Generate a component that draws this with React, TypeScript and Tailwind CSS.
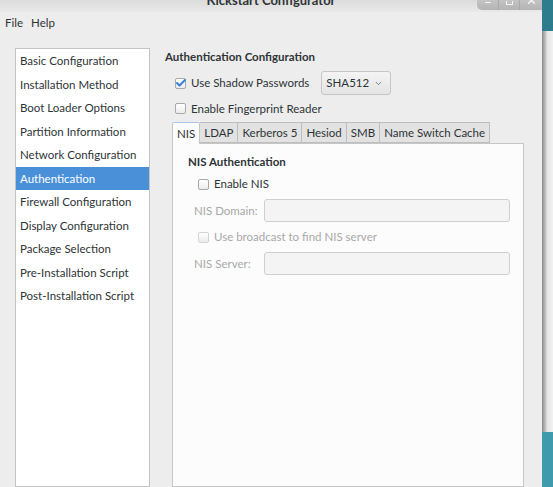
import { Check, ChevronDown } from "lucide-react";

const sections = [
  "Basic Configuration",
  "Installation Method",
  "Boot Loader Options",
  "Partition Information",
  "Network Configuration",
  "Authentication",
  "Firewall Configuration",
  "Display Configuration",
  "Package Selection",
  "Pre-Installation Script",
  "Post-Installation Script",
];

const tabs = ["NIS", "LDAP", "Kerberos 5", "Hesiod", "SMB", "Name Switch Cache"];

type BoxProps = { checked?: boolean; disabled?: boolean };

const CheckBox = ({ checked, disabled }: BoxProps) => (
  <span
    className={`relative inline-flex h-[11px] w-[11px] shrink-0 rounded-[2px] border bg-gradient-to-b from-white to-[#ececec] ${
      disabled ? "border-[#d4d4d4]" : "border-[#a8a8a8]"
    }`}
  >
    {checked && (
      <Check
        className="absolute -left-[1px] -top-[2px] h-[12px] w-[12px] text-[#3b7fd0]"
        strokeWidth={4}
      />
    )}
  </span>
);

const App = () => {
  return (
    <div className="flex h-[487px] w-[553px] overflow-hidden font-['Lato',sans-serif] text-[11.5px] text-[#2e3436]">
      {/* window */}
      <div className="flex w-[542px] shrink-0 flex-col bg-[#ededed]">
        {/* title bar, cut off at the top */}
        <div className="relative flex h-[12px] shrink-0 justify-center bg-gradient-to-b from-[#dcdcdc] to-[#e9e9e9]">
          <span className="-mt-[9px] text-[13px] font-bold text-[#2e3436]">
            Kickstart Configurator
          </span>
          <div className="absolute right-0 top-0 flex h-[10px] overflow-hidden rounded-bl-[5px] bg-gradient-to-b from-[#c4c4c4] to-[#b4b4b4]">
            <span className="flex w-[22px] items-start justify-center border-r border-[#a9a9a9] pt-[2px]">
              <span className="h-[1px] w-[6px] bg-[#f4f4f4]" />
            </span>
            <span className="flex w-[21px] items-start justify-center border-r border-[#a9a9a9]">
              <span className="mt-[1px] h-[4px] w-[7px] border-x border-b border-[#f4f4f4]" />
            </span>
            <span className="flex w-[22px] items-start justify-center">
              <svg width="7" height="4" viewBox="0 0 7 4">
                <path d="M0 4 L3.5 0 M7 4 L3.5 0" stroke="#f4f4f4" strokeWidth="1.4" />
              </svg>
            </span>
          </div>
        </div>

        {/* menu bar */}
        <div className="flex h-[20px] shrink-0 items-center gap-[8px] pl-[5px] pt-[1px]">
          <span>File</span>
          <span>Help</span>
        </div>

        <div className="flex min-h-0 flex-1 pt-[16px]">
          {/* section list */}
          <div className="ml-[15px] w-[135px] shrink-0 border border-[#c3c3c3] bg-white">
            {sections.map((s) => (
              <div
                key={s}
                className={`flex h-[23.5px] items-center pl-[4px] ${
                  s === "Authentication" ? "bg-[#4a90d9] text-white" : ""
                }`}
              >
                {s}
              </div>
            ))}
          </div>

          {/* right pane */}
          <div className="flex min-w-0 flex-1 flex-col pl-[15px]">
            <div className="flex h-[17px] items-center font-bold">
              Authentication Configuration
            </div>

            <div className="mt-[6px] flex h-[24px] items-center pl-[10px]">
              <CheckBox checked />
              <span className="ml-[5px]">Use Shadow Passwords</span>
              <div className="ml-[12px] flex h-[24px] w-[70px] items-center justify-between rounded-[3px] border border-[#c6c6c6] bg-gradient-to-b from-[#f4f4f4] to-[#e4e4e4] pl-[4px] pr-[7px]">
                <span>SHA512</span>
                <ChevronDown className="h-[9px] w-[9px] text-[#555]" strokeWidth={2} />
              </div>
            </div>

            <div className="mt-[2px] flex h-[23px] items-center pl-[10px]">
              <CheckBox />
              <span className="ml-[5px]">Enable Fingerprint Reader</span>
            </div>

            {/* notebook */}
            <div className="ml-[7px] mr-[18px] mt-[2px] flex min-h-0 flex-1 flex-col">
              <div className="flex h-[21px] items-end">
                {tabs.map((t) => (
                  <div
                    key={t}
                    className={
                      t === "NIS"
                        ? "relative z-10 -mb-[1px] flex h-[22px] items-center rounded-t-[2px] border border-b-0 border-[#c6c6c6] border-t-[#a9c6e8] bg-[#fcfcfc] px-[4px]"
                        : "flex h-[21px] items-center border border-l-0 border-[#bdbdbd] bg-[#e2e2e2] px-[4px]"
                    }
                  >
                    {t}
                  </div>
                ))}
              </div>

              <div className="flex-1 border border-[#c6c6c6] bg-[#fcfcfc] pl-[15px] pr-[13px]">
                <div className="mt-[9px] flex h-[17px] items-center font-bold">NIS Authentication</div>

                <div className="mt-[3px] flex h-[22px] items-center pl-[10px]">
                  <CheckBox />
                  <span className="ml-[5px]">Enable NIS</span>
                </div>

                <div className="mt-[4px] flex h-[23px] items-center">
                  <span className="w-[76px] pl-[6px] text-[#a8a8a8]">NIS Domain:</span>
                  <div className="h-[23px] flex-1 rounded-[3px] border border-[#cfcfcf] bg-[#f4f4f4]" />
                </div>

                <div className="mt-[4px] flex h-[22px] items-center pl-[10px] text-[#a8a8a8]">
                  <CheckBox disabled />
                  <span className="ml-[5px]">Use broadcast to find NIS server</span>
                </div>

                <div className="mt-[4px] flex h-[23px] items-center">
                  <span className="w-[76px] pl-[6px] text-[#a8a8a8]">NIS Server:</span>
                  <div className="h-[23px] flex-1 rounded-[3px] border border-[#cfcfcf] bg-[#f4f4f4]" />
                </div>
              </div>
            </div>
          </div>
        </div>
      </div>

      {/* desktop / window behind, at the right edge */}
      <div className="flex flex-1 flex-col bg-gradient-to-r from-[#8a8a8a] via-[#e6e6e6] to-[#f2f2f2]">
        <div className="h-[31px] bg-[#2d7c8d]" />
        <div className="flex-1" />
        <div className="h-[55px] bg-[#3f9aae]" />
      </div>
    </div>
  );
};

export default App;
